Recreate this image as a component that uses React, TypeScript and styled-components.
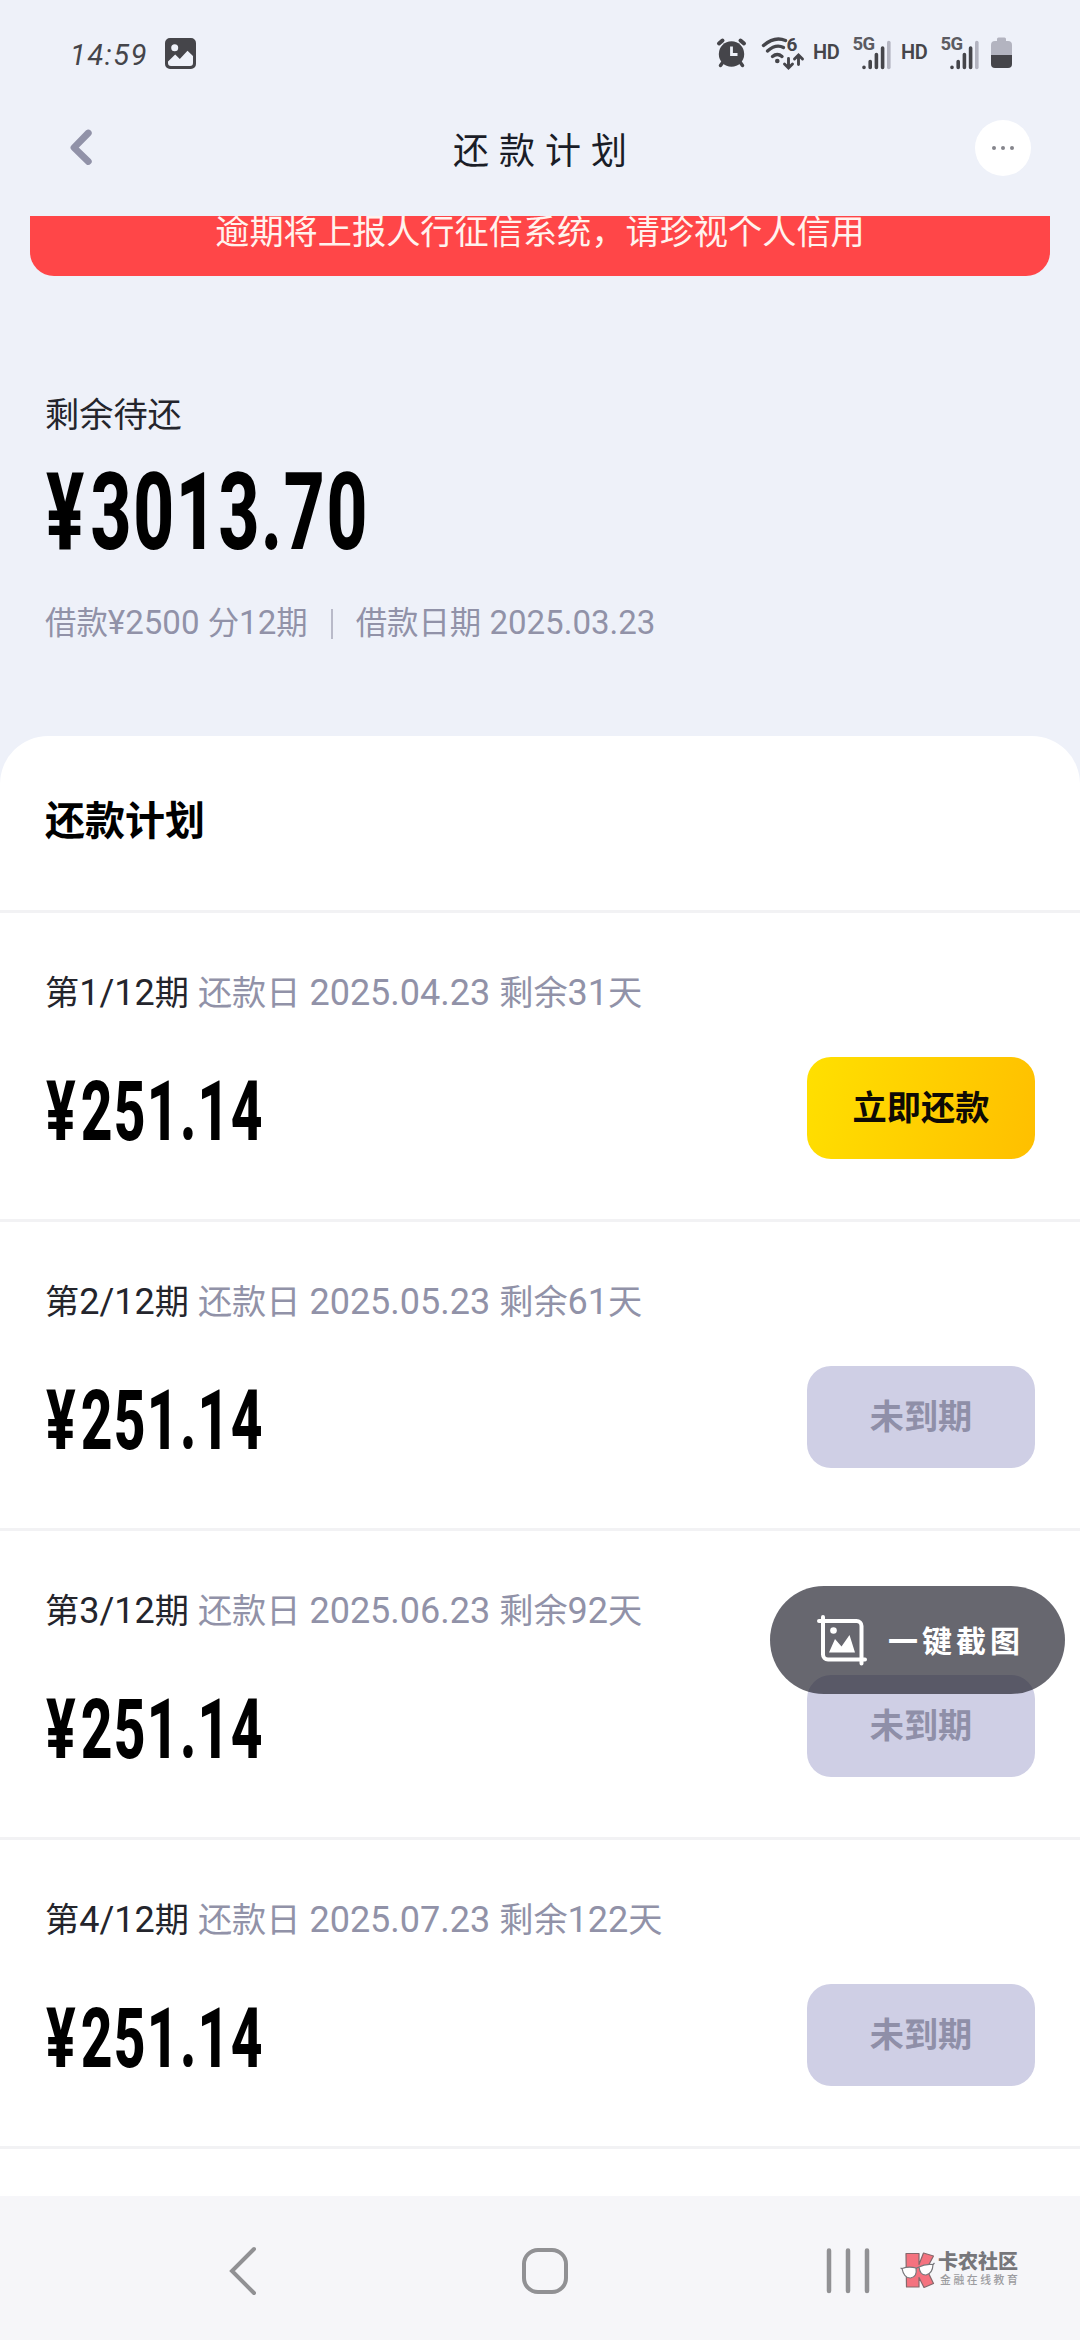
import React from "react";
import styled, { createGlobalStyle } from "styled-components";

const GlobalStyle = createGlobalStyle`
  * { box-sizing: border-box; }
  body {
    margin: 0;
    background: #eef1f9;
    font-family: Roboto, "Noto Sans CJK SC", sans-serif;
  }
`;

const Page = styled.div`
  position: relative;
  display: flex;
  flex-direction: column;
  width: 1080px;
  height: 2340px;
  overflow: hidden;
  background: #eef1f9;
`;

/* ---------- status bar ---------- */

const StatusBar = styled.header`
  display: flex;
  align-items: flex-start;
  justify-content: space-between;
  height: 108px;
  padding: 37px 68px 0 70px;
  color: #45454a;
`;

const StatusGroup = styled.div`
  display: flex;
  align-items: flex-start;
`;

const Clock = styled.span`
  width: 95px;
  font-size: 29px;
  font-style: italic;
  font-weight: 400;
  line-height: 36px;
  letter-spacing: 1.6px;
  white-space: nowrap;
`;

const StatusIcon = styled.svg<{ $gap?: number }>`
  display: block;
  flex: none;
  overflow: visible;
  margin-left: ${(p) => p.$gap ?? 0}px;
`;

const HdLabel = styled.span<{ $gap: number }>`
  width: 28px;
  margin-left: ${(p) => p.$gap}px;
  font-size: 20px;
  font-weight: 600;
  line-height: 31px;
  letter-spacing: -0.4px;
  white-space: nowrap;
`;

/* ---------- title bar ---------- */

const TitleBar = styled.div`
  display: grid;
  grid-template-columns: 1fr auto 1fr;
  align-items: start;
  height: 108px;
  padding: 12px 49px 0 68px;
`;

const BackIcon = styled.svg`
  display: block;
  margin-top: 8px;
`;

const Title = styled.h1`
  margin: 8px 9px 0 0;
  color: #1a1d27;
  font-size: 36px;
  font-weight: 400;
  line-height: 48px;
  letter-spacing: 10px;
`;

const MoreButton = styled.button`
  display: flex;
  align-items: center;
  justify-content: center;
  justify-self: end;
  gap: 5px;
  width: 56px;
  height: 56px;
  padding: 0;
  border: 0;
  border-radius: 50%;
  background: #fff;
`;

const Dot = styled.i`
  width: 4px;
  height: 4px;
  border-radius: 50%;
  background: #85858c;
`;

/* ---------- content ---------- */

const Content = styled.main`
  flex: 1;
  min-height: 0;
  overflow: hidden;
`;

const Banner = styled.div`
  height: 60px;
  margin: 0 30px;
  overflow: hidden;
  border-radius: 0 0 24px 24px;
  background: #ff4648;
`;

const BannerText = styled.p`
  margin: -8px 0 0;
  color: #fff3ee;
  font-size: 34.2px;
  line-height: 48px;
  text-align: center;
  white-space: nowrap;
`;

const Summary = styled.section`
  height: 460px;
  padding: 114px 45px 0;
`;

const SummaryLabel = styled.p`
  margin: 0;
  color: #24252c;
  font-size: 34.2px;
  line-height: 50px;
`;

const Amount = styled.strong<{ $size: number; $drop: number }>`
  display: block;
  width: max-content;
  padding-top: ${(p) => p.$drop}px;
  margin-left: 1px;
  color: #000;
  font-size: ${(p) => p.$size}px;
  font-weight: 800;
  line-height: 1;
  letter-spacing: 0.024em;
  white-space: nowrap;
  transform: scaleX(0.66);
  transform-origin: left center;
`;

const Yen = styled.span`
  letter-spacing: 0.09em;
`;

const SummaryAmount = styled.div`
  height: 109px;
  margin-top: 16px;
`;

const Meta = styled.div`
  display: flex;
  align-items: center;
  margin-top: 34px;
  color: #9192a8;
  font-size: 31.4px;
  line-height: 48px;
  white-space: nowrap;
`;

const Num = styled.span`
  font-size: 1.053em;
`;

const Separator = styled.i`
  width: 2px;
  height: 30px;
  margin: 0 23px;
  background: #b9bac9;
`;

const Sheet = styled.section`
  height: 1460px;
  border-radius: 48px 48px 0 0;
  background: #fff;
`;

const SheetTitle = styled.h2`
  height: 177px;
  margin: 0;
  padding: 56px 45px 0;
  border-bottom: 3px solid #f2f2f4;
  color: #000;
  font-size: 40px;
  font-weight: 700;
  line-height: 60px;
`;

const Row = styled.article`
  height: 309px;
  padding: 55px 45px 0;
  border-bottom: 3px solid #f2f2f4;
`;

const RowInfo = styled.p`
  margin: 0;
  color: #9192a8;
  font-size: 34.2px;
  line-height: 50px;
  white-space: nowrap;
`;

const Term = styled.span`
  color: #24252c;
`;

const RowBody = styled.div`
  display: flex;
  align-items: center;
  justify-content: space-between;
  margin-top: 39px;
`;

const PayButton = styled.button<{ $active: boolean }>`
  width: 228px;
  height: 102px;
  padding: 0 0 6px;
  border: 0;
  border-radius: 24px;
  background: ${(p) => (p.$active ? "linear-gradient(105deg, #ffe000, #ffbf00)" : "#cfcfe5")};
  color: ${(p) => (p.$active ? "#0e0a05" : "#8f8fa8")};
  font-family: inherit;
  font-size: 34.2px;
  font-weight: 700;
`;

/* ---------- floating action and navigation ---------- */

const FloatingPill = styled.div`
  position: absolute;
  top: 1586px;
  left: 770px;
  display: flex;
  align-items: center;
  width: 295px;
  height: 108px;
  padding-left: 46px;
  border-radius: 54px;
  background: rgba(39, 38, 50, 0.7);
  color: #fff;
`;

const PillLabel = styled.span`
  margin: 3px 0 0 20px;
  font-size: 30px;
  font-weight: 700;
  line-height: 40px;
  letter-spacing: 4px;
  white-space: nowrap;
`;

const NavBar = styled.nav`
  position: relative;
  display: flex;
  align-items: flex-start;
  height: 144px;
  padding: 50px 0 0 228px;
  background: #f6f6f9;
`;

const NavIcon = styled.svg<{ $gap?: number }>`
  display: block;
  flex: none;
  margin-left: ${(p) => p.$gap ?? 0}px;
`;

const Watermark = styled.div`
  position: absolute;
  top: 55px;
  left: 900px;
  display: flex;
  gap: 2px;
`;

const BrandText = styled.div`
  display: flex;
  flex-direction: column;
  white-space: nowrap;
`;

const BrandName = styled.b`
  color: #77777b;
  font-size: 20px;
  font-weight: 900;
  line-height: 23px;
`;

const BrandTag = styled.span`
  margin-left: 2px;
  color: #9c9ca0;
  font-size: 10.8px;
  font-weight: 500;
  line-height: 13px;
  letter-spacing: 2.6px;
`;

const Signal = ({ gap }: { gap: number }) => (
  <StatusIcon $gap={gap} width="38" height="33" viewBox="0 0 38 33">
    <text x="-0.5" y="13.2" fontFamily="Roboto" fontSize="18.5" fontWeight="700" fill="#5b5b62" letterSpacing="-0.6">
      5G
    </text>
    <g stroke="#45454a" strokeWidth="3.6" strokeLinecap="round">
      <path d="M11 30.2v.2M17.2 24.5v5.9M23.4 17.5v12.9M29.6 11v19.4" />
      <path d="M35.8 5.5v24.9" stroke="#b3b4c0" />
    </g>
  </StatusIcon>
);

const BrandMark = () => (
  <svg width="36" height="38" viewBox="0 0 36 38">
    <path
      d="M6 2.500h13v11l4.500-11.500 10 3-7 13 7 14.500-9.500 4-5-10v9.500H6.500z"
      fill="#f4727f"
      stroke="#85686c"
      strokeWidth="1.2"
      strokeLinejoin="round"
    />
    <g fill="#fff" stroke="#77777b" strokeWidth="1.2">
      <path d="M2 17.500q7-2.500 14-.5 1.500 9-5.500 10-6.500.3-8.500-9.500z" />
      <path d="M19 16q6-3.500 14-2.500-.3 9-7 10.500-6 .3-7-8z" />
      <path d="M.5 17l2 .8M16 18q1.500-2 3-1.500M33 13.500l1.500-1.500" fill="none" />
    </g>
  </svg>
);

const rows = [
  { term: 1, date: "2025.04.23", days: 31 },
  { term: 2, date: "2025.05.23", days: 61 },
  { term: 3, date: "2025.06.23", days: 92 },
  { term: 4, date: "2025.07.23", days: 122 },
];

export default function App() {
  return (
    <>
      <GlobalStyle />
      <Page>
        <StatusBar>
          <StatusGroup>
            <Clock>14:59</Clock>
            <StatusIcon width="32" height="33" viewBox="0 0 32 33">
              <path
                fillRule="evenodd"
                fill="#45454a"
                d="M5 1h21a5 5 0 0 1 5 5v21a5 5 0 0 1-5 5H5a5 5 0 0 1-5-5V6a5 5 0 0 1 5-5zM9.700 7.200a3.500 3.500 0 1 0 0 7 3.500 3.500 0 0 0 0-7zM3 24.500v1.500a3 3 0 0 0 3 3h19a3 3 0 0 0 3-3v-7l-5.500-5.200L14.800 22l-4.600-4.400z"
              />
            </StatusIcon>
          </StatusGroup>
          <StatusGroup>
            <StatusIcon width="29" height="32" viewBox="0 0 29 32">
              <g stroke="#45454a" strokeLinecap="round" fill="none">
                <path d="M2 6.500l3.500-3M27 6.500l-3.500-3" strokeWidth="4" />
                <path d="M6 25l-2.500 3.500M23 25l2.500 3.500" strokeWidth="3.500" />
              </g>
              <circle cx="14.500" cy="17" r="12.700" fill="#45454a" />
              <path d="M14.500 9.500v8h6" fill="none" stroke="#eef1f9" strokeWidth="2.800" />
            </StatusIcon>
            <StatusIcon $gap={15} width="44" height="33" viewBox="0 0 44 33">
              <g fill="none" stroke="#45454a" strokeWidth="3.400" strokeLinecap="round">
                <path d="M2.500 8.500Q13.500-1 24.500 3.500" />
                <path d="M6.500 14Q15 6.500 22.500 10.500" />
                <path d="M11.500 19.500q4.800-4 9.500 0" />
                <path d="M27.500 21.500v8.500M23.500 27l4 4 4-4M37.500 27.500v-8.500M33.500 22l4-4 4 4" strokeWidth="2.900" />
              </g>
              <circle cx="16.300" cy="24" r="2.300" fill="#45454a" />
              <text x="25.500" y="14" fontFamily="Roboto" fontSize="19" fontWeight="700" fill="#45454a">
                6
              </text>
            </StatusIcon>
            <HdLabel $gap={8}>HD</HdLabel>
            <Signal gap={12} />
            <HdLabel $gap={10}>HD</HdLabel>
            <Signal gap={12} />
            <StatusIcon $gap={12} width="21" height="31" viewBox="0 0 21 31">
              <path d="M6 2a1.500 1.500 0 0 1 1.500-1.500h6A1.500 1.500 0 0 1 15 2v2h2a4 4 0 0 1 4 4v10H0V8a4 4 0 0 1 4-4h2z" fill="#b3b4c0" />
              <path d="M0 18h21v9a4 4 0 0 1-4 4H4a4 4 0 0 1-4-4z" fill="#45454a" />
            </StatusIcon>
          </StatusGroup>
        </StatusBar>

        <TitleBar>
          <BackIcon width="26" height="38" viewBox="0 0 26 38">
            <path d="M20.300 5L6 19.600 20.300 33.500" fill="none" stroke="#9192a8" strokeWidth="6.800" strokeLinecap="round" strokeLinejoin="round" />
          </BackIcon>
          <Title>还款计划</Title>
          <MoreButton aria-label="更多">
            <Dot />
            <Dot />
            <Dot />
          </MoreButton>
        </TitleBar>

        <Content>
          <Banner>
            <BannerText>逾期将上报人行征信系统，请珍视个人信用</BannerText>
          </Banner>

          <Summary>
            <SummaryLabel>剩余待还</SummaryLabel>
            <SummaryAmount>
              <Amount $size={107.5} $drop={3}>
                <Yen>¥</Yen>3013.70
              </Amount>
            </SummaryAmount>
            <Meta>
              <span>
                借款<Num>¥2500 </Num>分<Num>12</Num>期
              </span>
              <Separator />
              <span>
                借款日期<Num> 2025.03.23</Num>
              </span>
            </Meta>
          </Summary>

          <Sheet>
            <SheetTitle>还款计划</SheetTitle>
            {rows.map((row) => (
              <Row key={row.term}>
                <RowInfo>
                  <Term>
                    第<Num>{row.term}/12</Num>期
                  </Term>
                  <Num> </Num>还款日<Num> {row.date} </Num>剩余<Num>{row.days}</Num>天
                </RowInfo>
                <RowBody>
                  <Amount $size={83.5} $drop={8}>
                    <Yen>¥</Yen>251.14
                  </Amount>
                  <PayButton $active={row.term === 1}>{row.term === 1 ? "立即还款" : "未到期"}</PayButton>
                </RowBody>
              </Row>
            ))}
          </Sheet>
        </Content>

        <NavBar>
          <NavIcon width="30" height="50" viewBox="0 0 30 50">
            <path d="M26 3L4 25l22 22" fill="none" stroke="#919194" strokeWidth="4" strokeLinecap="round" />
          </NavIcon>
          <NavIcon $gap={262} width="50" height="50" viewBox="0 0 50 50">
            <rect x="4" y="4" width="42" height="42" rx="14" fill="none" stroke="#919194" strokeWidth="4" />
          </NavIcon>
          <NavIcon $gap={254} width="50" height="50" viewBox="0 0 50 50">
            <path d="M5 4.500v40.500M24 4.500v40.500M43 4.500v40.500" fill="none" stroke="#919194" strokeWidth="4.500" strokeLinecap="round" />
          </NavIcon>
          <Watermark>
            <BrandMark />
            <BrandText>
              <BrandName>卡农社区</BrandName>
              <BrandTag>金融在线教育</BrandTag>
            </BrandText>
          </Watermark>
        </NavBar>

        <FloatingPill>
          <svg width="52" height="52" viewBox="0 0 52 52">
            <g fill="none" stroke="#fff" strokeWidth="4" strokeLinecap="round" strokeLinejoin="round">
              <path d="M7 3v37.500a5 5 0 0 0 5 5h37" />
              <path d="M3 7h37.500a5 5 0 0 1 5 5v37.500" />
            </g>
            <circle cx="17.500" cy="16.500" r="3.300" fill="#fff" />
            <path d="M13 38.500l6-13.500 6.500 7.500 8-11.500 5.500 17.500z" fill="#fff" />
          </svg>
          <PillLabel>一键截图</PillLabel>
        </FloatingPill>
      </Page>
    </>
  );
}
